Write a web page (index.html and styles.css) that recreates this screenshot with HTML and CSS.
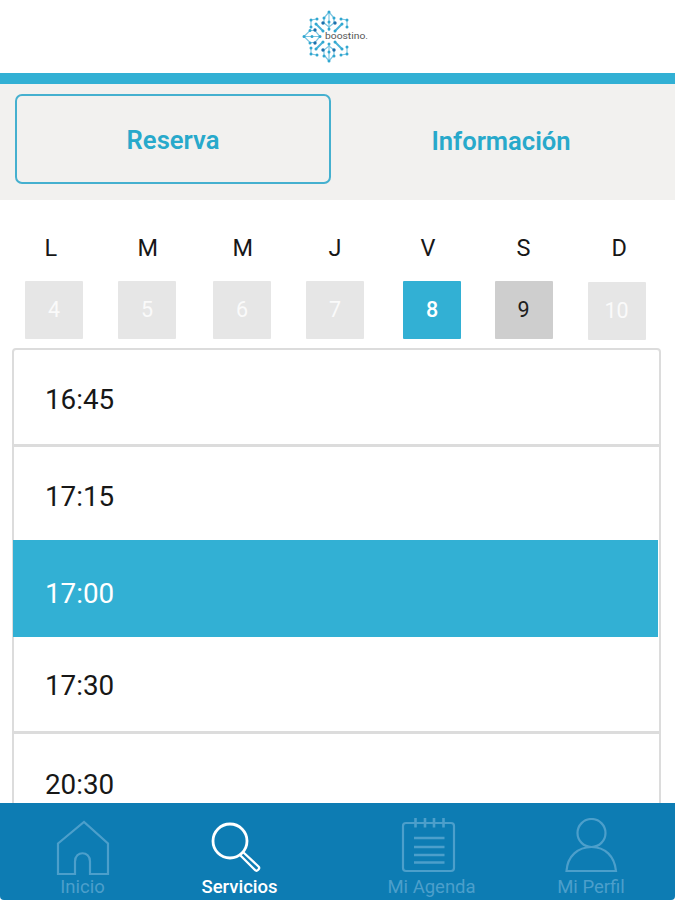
FILE: index.html
```html
<!DOCTYPE html>
<html lang="es">
<head>
<meta charset="utf-8">
<title>Reserva</title>
<link rel="stylesheet" href="styles.css">
</head>
<body>
<div class="app">
  <header class="header">
    <svg class="logo" width="68" height="56" viewBox="301 9 68 56" role="img">
      <g fill="none" stroke="#7cc6e2" stroke-width="1.200">
        <path d="M329 12l-5 6v5l5 4 5-4v-5zM329 61l-5-6v-5l5-4 5 4v5zM304 36.5l6-6h5l5 6-5 6h-5z"/>
        <path d="M317 19l-6 1v7M341 19l6 1v7M317 55l-6-1v-7M341 55l6-1v-7"/>
        <path d="M329 12v19M329 43v18M304 36.500h17"/>
      </g>
      <g fill="none" stroke="#4ab3d8" stroke-width="2" stroke-linecap="round">
        <path d="M316 24l7 7M342 24l-7 7M316 49l7-7M342 49l-7-7"/>
      </g>
      <g fill="none" stroke="#31a7d0" stroke-width="3" stroke-linecap="round">
        <path d="M329 12h0M329 61h0M304 36.5h0M311 20h0M347 20h0M311 54h0M347 54h0M324 18h0M334 18h0M324 56h0M334 56h0M310 30.500h0M310 43h0M317 19h0M341 19h0M317 55h0M341 55h0M311 27h0M347 27h0M311 48h0M347 47h0M329 22h0M329 52h0M316 24h0M342 24h0M316 49h0M342 49h0M323 31h0M335 31h0M323 42h0M335 42h0M320 36.5h0M312 36.5h0M329 29h0M329 44h0"/>
      </g>
      <g fill="none" stroke="#1c70ad" stroke-width="3.4" stroke-linecap="round">
        <path d="M323 23h0M335 23h0M315 30h0M315 43h0M323 50h0M334 50h0"/>
      </g>
      <text class="logo-text" x="325" y="39" textLength="43" lengthAdjust="spacingAndGlyphs">boostino.</text>
    </svg>
  </header>

  <div class="tabs">
    <div class="tab tab-active">Reserva</div>
    <div class="tab">Información</div>
  </div>

  <main class="content">
    <div class="weekdays">
      <span>L</span><span>M</span><span>M</span><span>J</span><span>V</span><span>S</span><span>D</span>
    </div>
    <div class="dates">
      <span class="date">4</span>
      <span class="date">5</span>
      <span class="date">6</span>
      <span class="date">7</span>
      <span class="date date-selected">8</span>
      <span class="date date-open">9</span>
      <span class="date date-last">10</span>
    </div>
    <div class="slots">
      <div class="slot">16:45</div>
      <div class="slot slot-plain">17:15</div>
      <div class="slot slot-selected">17:00</div>
      <div class="slot slot-short">17:30</div>
      <div class="slot slot-late">20:30</div>
    </div>
  </main>

  <nav class="nav">
    <div class="nav-item nav-home">
      <svg class="icon" width="54" height="58" viewBox="0 0 54 58">
        <path d="M2 25.500L28 4 52 25.500V56H34V43.500c0-11-15-11-15 0V56H2z"/>
      </svg>
      <span>Inicio</span>
    </div>
    <div class="nav-item nav-services">
      <svg class="icon icon-search" width="52" height="58" viewBox="0 0 52 58">
        <circle cx="20" cy="23" r="17"/>
        <path class="handle" d="M30.500 37.500L45 52c2 2 5.500-1.500 3.500-3.500L33.500 34.500"/>
      </svg>
      <span>Servicios</span>
    </div>
    <div class="nav-item nav-agenda">
      <svg class="icon icon-agenda" width="56" height="58" viewBox="0 0 56 58">
        <path d="M5 5H50q3 0 3 3V50q0 3-3 3H5q-3 0-3-3V8q0-3 3-3z"/>
        <path class="thick" d="M14.500 0v9.500M24 0v9.500M33 0v9.500M42.500 0v9.500M13 20H43.500M13 29H43.500M13 37H43.500M13 44.500H43.500"/>
      </svg>
      <span>Mi Agenda</span>
    </div>
    <div class="nav-item nav-profile">
      <svg class="icon" width="54" height="58" viewBox="0 0 54 58">
        <circle cx="27.500" cy="15" r="14"/>
        <path d="M2.500 53C3.500 38 14 29 27.500 29s23 9 24.500 24z"/>
      </svg>
      <span>Mi Perfil</span>
    </div>
  </nav>
</div>
</body>
</html>
```

FILE: styles.css
```css
* {
  box-sizing: border-box;
}

body {
  margin: 0;
  background: #fff;
  font-family: Roboto, "Liberation Sans", sans-serif;
  color: #171717;
}

.app {
  display: flex;
  flex-direction: column;
  height: 900px;
  overflow: hidden;
}

.header {
  flex: none;
  height: 84px;
  padding: 9px 0 0 301px;
  border-bottom: 11px solid #32b0d4;
}

.logo {
  display: block;
}

.logo-text {
  font-size: 9px;
  fill: #555;
}

.tabs {
  flex: none;
  display: flex;
  gap: 12px;
  height: 116px;
  padding: 10px 16px 16px 15px;
  background: #f2f1ef;
}

.tab {
  flex: 1;
  display: flex;
  align-items: center;
  justify-content: center;
  height: 90px;
  padding-top: 3px;
  font-size: 25.600px;
  font-weight: 600;
  color: #28a9cb;
}

.tab-active {
  flex: none;
  width: 316px;
  padding-top: 1px;
  border: 2px solid #45b0cf;
  border-radius: 7px;
}

.content {
  flex: 1;
  min-height: 0;
  overflow: hidden;
}

.weekdays {
  display: grid;
  grid-template-columns: 93px 95px 96px 92px 96px 95px 20px;
  height: 81px;
  padding: 34px 0 0 44.500px;
  font-size: 23.500px;
  line-height: 28px;
}

.dates {
  display: grid;
  grid-template-columns: 93px 95px 93px 97px 91.5px 93px 58px;
  height: 67px;
  padding-left: 25px;
}

.date {
  display: flex;
  align-items: center;
  justify-content: center;
  width: 58px;
  height: 58px;
  padding-bottom: 2px;
  border-radius: 1px;
  background: #e6e6e6;
  font-size: 21.500px;
  color: #fafafa;
}

.date-selected {
  background: #32b0d4;
  font-weight: 500;
  color: #fff;
}

.date-open {
  background: #cecece;
  color: #202020;
}

.date-last {
  margin-top: 1px;
}

.slots {
  width: 649px;
  margin-left: 12px;
  border: 2px solid #dcdcdc;
  border-radius: 4px;
}

.slot {
  display: flex;
  align-items: center;
  height: 97px;
  padding: 5px 0 0 31px;
  border-bottom: 3px solid #dcdcdc;
  font-size: 27.800px;
}

.slot-plain {
  height: 93px;
  border-bottom: 0;
}

.slot-selected {
  height: 97px;
  margin: 0 1px 0 -1px;
  padding: 9px 0 0 32px;
  border-bottom: 0;
  background: #32b0d4;
  color: #fff;
}

.slot-short {
  height: 97px;
  padding-top: 3px;
}

.slot-late {
  padding-top: 7px;
}

.nav {
  flex: none;
  display: grid;
  grid-template-columns: 157px 157px 227px 92px;
  height: 97px;
  padding: 15px 0 0 4px;
  background: #0d7cb3;
  border-radius: 0 0 4px 4px;
  font-size: 18.500px;
  line-height: 22px;
  color: #4c9fcb;
}

.nav-item {
  display: flex;
  flex-direction: column;
  align-items: center;
}

.nav-services {
  color: #fff;
  font-weight: 500;
}

.icon {
  display: block;
  fill: none;
  stroke: currentColor;
  stroke-width: 2.200;
}

.icon-search {
  margin-right: 7px;
  stroke-width: 2.800;
}

.handle {
  stroke-width: 2.300;
}

.icon-agenda {
  margin-right: 5px;
}

.thick {
  stroke-width: 2.600;
}
```
